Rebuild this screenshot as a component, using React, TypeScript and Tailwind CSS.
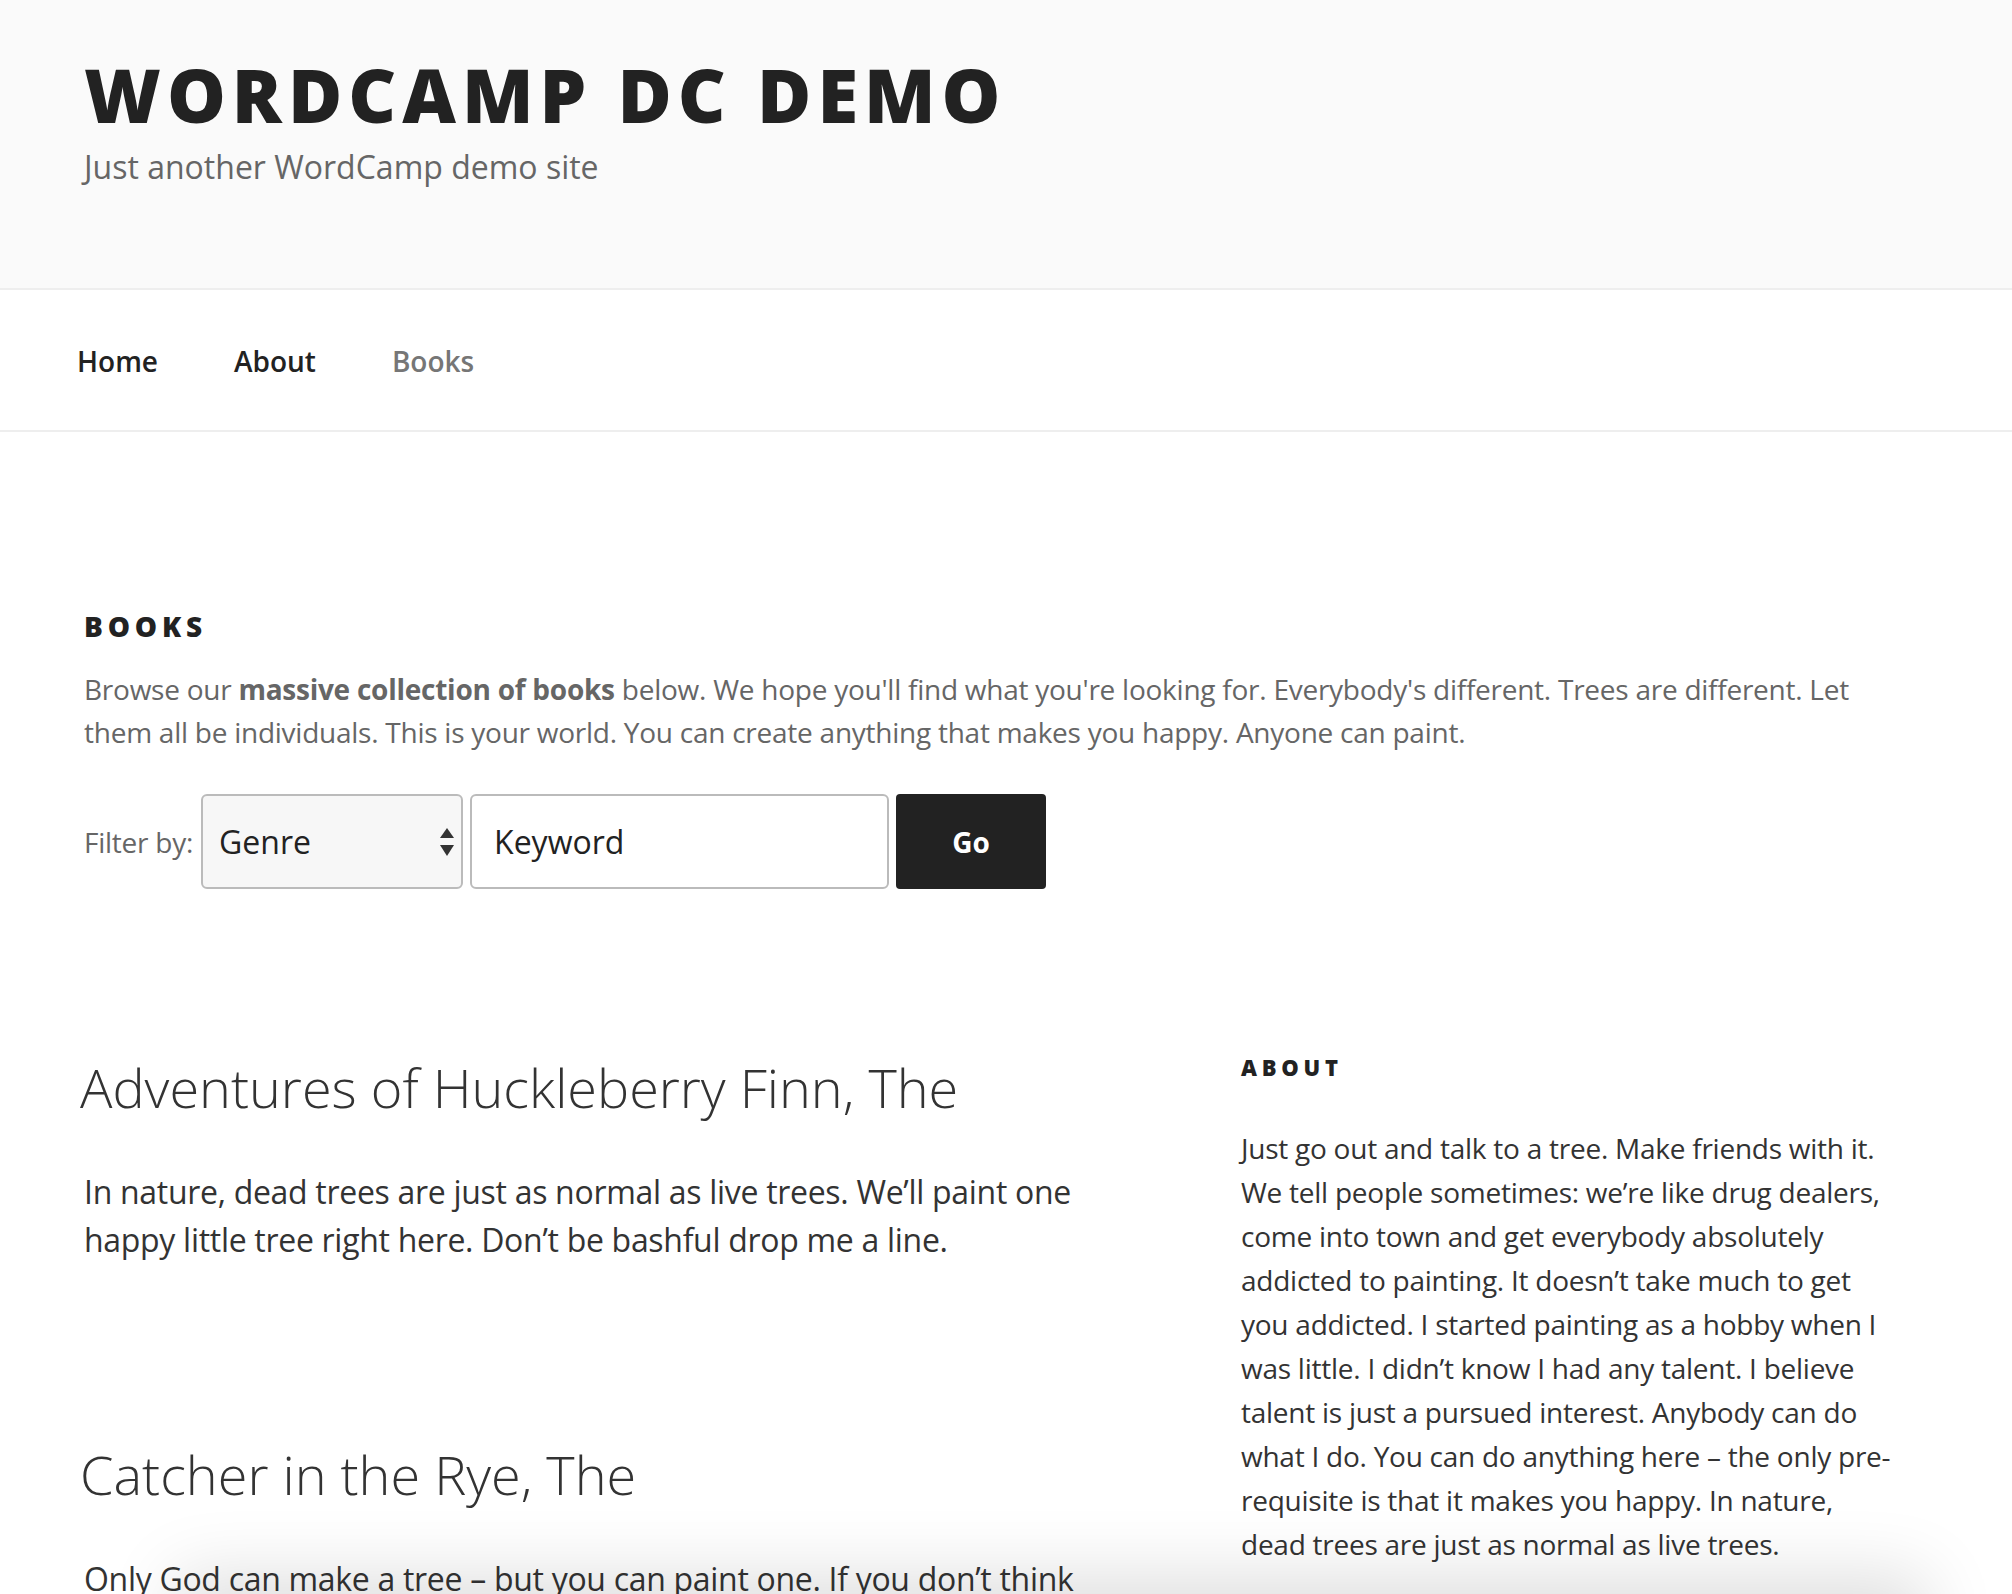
export default function App() {
  return (
    <div className="relative h-[1594px] overflow-hidden bg-white font-['Open_Sans',sans-serif]">
      <header className="border-b-2 border-[#eeeeee] bg-[#fafafa] pb-[101px] pl-[84px] pt-[55px]">
        <h1 className="text-[74px] font-extrabold uppercase leading-[80px] tracking-[6px] text-[#222222]">
          WordCamp DC Demo
        </h1>
        <p className="mt-[12px] text-[32px] leading-[40px] text-[#666666]">Just another WordCamp demo site</p>
      </header>

      <nav className="flex h-[142px] items-center gap-[76px] border-b-2 border-[#eeeeee] pl-[77px] pt-[2px]">
        <a className="text-[28px] font-semibold leading-[40px] text-[#222222]">Home</a>
        <a className="text-[28px] font-semibold leading-[40px] text-[#222222]">About</a>
        <a className="text-[28px] font-semibold leading-[40px] text-[#767676]">Books</a>
      </nav>

      <main className="pl-[84px] pt-[174px]">
        <h2 className="text-[28px] font-extrabold uppercase leading-[40px] tracking-[4.8px] text-[#222222]">Books</h2>
        <p className="mt-[22px] w-[1800px] text-[28px] leading-[43px] tracking-[-0.25px] text-[#666666]">
          Browse our <strong className="font-bold">massive collection of books</strong> below. We hope you'll find what
          you're looking for. Everybody's different. Trees are different. Let them all be individuals. This is your
          world. You can create anything that makes you happy. Anyone can paint.
        </p>

        <form className="mt-[40px] flex h-[95px] items-stretch">
          <label className="mr-[8px] self-center text-[28px] leading-[40px] tracking-[-0.25px] text-[#666666]">
            Filter by:
          </label>
          <div className="flex w-[262px] items-center justify-between rounded-[6px] border-2 border-[#bbbbbb] bg-[#f7f7f7] pl-[16px] pr-[7px]">
            <span className="text-[32px] leading-[40px] text-[#222222]">Genre</span>
            <svg width="14" height="28" viewBox="0 0 14 28" className="fill-[#333333]">
              <polygon points="7,0 14,10 0,10" />
              <polygon points="0,17 14,17 7,28" />
            </svg>
          </div>
          <input
            readOnly
            placeholder="Keyword"
            className="ml-[7px] w-[419px] rounded-[6px] border-2 border-[#bbbbbb] bg-white pl-[22px] text-[32px] leading-[40px] text-[#222222] outline-none placeholder:text-[#222222]"
          />
          <button
            type="button"
            className="ml-[7px] w-[150px] rounded-[4px] bg-[#222222] text-[28px] font-bold leading-[40px] text-white"
          >
            Go
          </button>
        </form>

        <div className="mt-[163px] flex items-start">
          <div className="w-[1010px] shrink-0">
            <article>
              <h2 className="-ml-[4px] text-[54px] font-light leading-[70px] text-[#333333]">
                Adventures of Huckleberry Finn, The
              </h2>
              <p className="mt-[46px] text-[32px] leading-[48px] tracking-[-0.3px] text-[#333333]">
                In nature, dead trees are just as normal as live trees. We’ll paint one
                <br />
                happy little tree right here. Don’t be bashful drop me a line.
              </p>
            </article>
            <article className="mt-[175px]">
              <h2 className="-ml-[4px] text-[54px] font-light leading-[70px] text-[#333333]">
                Catcher in the Rye, The
              </h2>
              <p className="mt-[46px] text-[32px] leading-[48px] tracking-[-0.3px] text-[#333333]">
                Only God can make a tree – but you can paint one. If you don’t think
                <br />
                you can, just try it and see.
              </p>
            </article>
          </div>

          <aside className="ml-[147px] w-[680px] shrink-0">
            <h2 className="text-[22px] font-extrabold uppercase leading-[30px] tracking-[4.75px] text-[#222222]">
              About
            </h2>
            <p className="mt-[44px] text-[28px] leading-[44px] tracking-[-0.25px] text-[#333333]">
              Just go out and talk to a tree. Make friends with it.
              <br />
              We tell people sometimes: we’re like drug dealers,
              <br />
              come into town and get everybody absolutely
              <br />
              addicted to painting. It doesn’t take much to get
              <br />
              you addicted. I started painting as a hobby when I
              <br />
              was little. I didn’t know I had any talent. I believe
              <br />
              talent is just a pursued interest. Anybody can do
              <br />
              what I do. You can do anything here – the only pre-
              <br />
              requisite is that it makes you happy. In nature,
              <br />
              dead trees are just as normal as live trees.
            </p>
          </aside>
        </div>
      </main>

      <div className="pointer-events-none absolute left-[200px] right-[110px] top-[1600px] h-[100px] bg-white shadow-[0_0_70px_25px_rgba(0,0,0,0.13)]" />
    </div>
  );
}
